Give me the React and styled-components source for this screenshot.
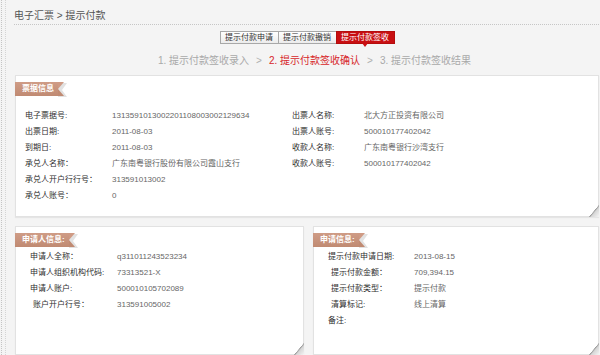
import React from "react";
import styled, { createGlobalStyle } from "styled-components";

const GlobalStyle = createGlobalStyle`
  html, body {
    margin: 0;
    padding: 0;
    background: #f4f4f4;
  }
  body {
    font-family: "Liberation Sans", "Noto Sans CJK SC", sans-serif;
  }
`;

const billLeft = [
  ["电子票据号:", "1313591013002201108003002129634"],
  ["出票日期:", "2011-08-03"],
  ["到期日:", "2011-08-03"],
  ["承兑人名称：", "广东南粤银行股份有限公司霞山支行"],
  ["承兑人开户行行号：", "313591013002"],
  ["承兑人账号：", "0"],
];

const billRight = [
  ["出票人名称:", "北大方正投资有限公司"],
  ["出票人账号:", "500010177402042"],
  ["收款人名称:", "广东南粤银行沙湾支行"],
  ["收款人账号:", "500010177402042"],
];

const applicant = [
  ["申请人全称：", "q311011243523234", 0],
  ["申请人组织机构代码:", "73313521-X", 0],
  ["申请人账户:", "500010105702089", 0],
  ["账户开户行号：", "313591005002", 3],
];

const request = [
  ["提示付款申请日期:", "2013-08-15", 0],
  ["提示付款金额：", "709,394.15", 3],
  ["提示付款类型：", "提示付款", 3],
  ["清算标记:", "线上清算", 3],
  ["备注:", "", 0],
];

function App() {
  return (
    <>
      <GlobalStyle />
      <Page>
        <Rail />
        <Main>
          <Crumb>电子汇票 &gt; 提示付款</Crumb>
          <Tabs>
            <Tab>提示付款申请</Tab>
            <Tab>提示付款撤销</Tab>
            <Tab active>提示付款签收</Tab>
          </Tabs>
          <Steps>
            <Step>1. 提示付款签收录入</Step>
            <Arrow>&gt;</Arrow>
            <Step current>2. 提示付款签收确认</Step>
            <Arrow>&gt;</Arrow>
            <Step>3. 提示付款签收结果</Step>
          </Steps>

          <Panel height={142}>
            <Ribbon>票据信息</Ribbon>
            <BillGrid>
              <Column>
                {billLeft.map(([k, v]) => (
                  <Row key={k}>
                    <Label width={87}>{k}</Label>
                    <Value>{v}</Value>
                  </Row>
                ))}
              </Column>
              <Column>
                {billRight.map(([k, v]) => (
                  <Row key={k}>
                    <Label width={72}>{k}</Label>
                    <Value>{v}</Value>
                  </Row>
                ))}
              </Column>
            </BillGrid>
          </Panel>

          <BottomRow>
            <Panel width={289} height={129}>
              <Ribbon>申请人信息:</Ribbon>
              <List>
                {applicant.map(([k, v, indent]) => (
                  <Row key={k} indent={indent}>
                    <Label width={87 - indent}>{k}</Label>
                    <Value>{v}</Value>
                  </Row>
                ))}
              </List>
            </Panel>
            <Panel grow height={129}>
              <Ribbon>申请信息:</Ribbon>
              <List>
                {request.map(([k, v, indent]) => (
                  <Row key={k} indent={indent}>
                    <Label width={86 - indent}>{k}</Label>
                    <Value>{v}</Value>
                  </Row>
                ))}
              </List>
            </Panel>
          </BottomRow>
        </Main>
      </Page>
    </>
  );
}

export default App;

const Page = styled.div`
  display: flex;
  width: 600px;
  height: 355px;
  overflow: hidden;
  background: #f4f4f4;
`;

const Rail = styled.div`
  flex: none;
  width: 3px;
  margin-left: 1px;
  border-left: 1px dotted #c4c4c4;
  border-right: 1px dotted #d4d4d4;
`;

const Main = styled.div`
  flex: 1;
  display: flex;
  flex-direction: column;
  margin-left: 8px;
  margin-right: 1px;
`;

const Crumb = styled.div`
  height: 25px;
  box-sizing: border-box;
  padding-top: 10px;
  font-size: 10px;
  line-height: 12px;
  color: #555;
  border-bottom: 1px dotted #c6c6c6;
`;

const Tabs = styled.div`
  display: flex;
  justify-content: center;
  margin-top: 6px;
  padding-left: 1px;
`;

const Tab = styled.div`
  position: relative;
  width: 59px;
  height: 13px;
  box-sizing: border-box;
  text-align: center;
  font-size: 8px;
  line-height: 11px;
  color: ${(p) => (p.active ? "#fff" : "#333")};
  border: 1px solid ${(p) => (p.active ? "#b40d0d" : "#a8a8a8")};
  background: ${(p) =>
    p.active ? "#c80f12" : "linear-gradient(#ffffff, #ececec)"};
  & + & {
    margin-left: -1px;
  }
  &::after {
    content: "";
    display: ${(p) => (p.active ? "block" : "none")};
    position: absolute;
    left: 50%;
    top: 100%;
    margin-left: -3px;
    border-left: 3px solid transparent;
    border-right: 3px solid transparent;
    border-top: 4px solid #c80f12;
  }
`;

const Steps = styled.div`
  display: flex;
  justify-content: center;
  align-items: center;
  margin-top: 10px;
  padding-left: 16px;
  height: 14px;
  font-size: 10px;
  line-height: 14px;
  white-space: nowrap;
`;

const Step = styled.span`
  color: ${(p) => (p.current ? "#d7262a" : "#a9a9a9")};
`;

const Arrow = styled.span`
  color: #b0b0b0;
  margin: 0 7px;
`;

const Panel = styled.div`
  position: relative;
  box-sizing: border-box;
  height: ${(p) => p.height}px;
  width: ${(p) => (p.width ? `${p.width}px` : "auto")};
  flex: ${(p) => (p.grow ? 1 : "none")};
  margin-top: 7px;
  margin-left: 1px;
  background: #fff;
  border: 1px solid #e2e2e2;
  box-shadow: 0 1px 1px rgba(0, 0, 0, 0.06);

  &::after {
    content: "";
    position: absolute;
    right: -1px;
    bottom: -1px;
    width: 10px;
    height: 12px;
    background: linear-gradient(
      to bottom right,
      transparent 0 48%,
      #9c9c9c 51%,
      #d6d6d6 60%,
      #f4f4f4 100%
    );
  }
`;

const Ribbon = styled.div`
  position: relative;
  display: inline-block;
  margin-top: 6px;
  margin-left: -1px;
  height: 14px;
  padding: 0 4px 0 7px;
  font-size: 8px;
  font-weight: bold;
  line-height: 14px;
  color: #fff;
  background: linear-gradient(#cf9c86, #c08a72);

  &::before {
    content: "";
    position: absolute;
    top: 1px;
    right: -9px;
    width: 0;
    height: 0;
    border-top: 7px solid #e2e2e2;
    border-bottom: 7px solid #e2e2e2;
    border-right: 5px solid transparent;
    border-left: 4px solid #e2e2e2;
  }
  &::after {
    content: "";
    position: absolute;
    top: 0;
    right: -6px;
    width: 0;
    height: 0;
    border-top: 7px solid #cf9a84;
    border-bottom: 7px solid #c08a72;
    border-right: 6px solid transparent;
  }
`;

const BillGrid = styled.div`
  display: grid;
  grid-template-columns: 267px 1fr;
  margin-top: 12px;
  padding-left: 9px;
`;

const Column = styled.div`
  display: flex;
  flex-direction: column;
`;

const List = styled.div`
  display: flex;
  flex-direction: column;
  margin-top: 2px;
  padding-left: 14px;
`;

const Row = styled.div`
  display: flex;
  height: 16px;
  line-height: 16px;
  font-size: 8px;
  white-space: nowrap;
  padding-left: ${(p) => p.indent || 0}px;
`;

const Label = styled.span`
  flex: none;
  width: ${(p) => p.width}px;
  color: #2e2e2e;
`;

const Value = styled.span`
  color: #666;
`;

const BottomRow = styled.div`
  display: flex;
  gap: 8px;
  margin-top: 2px;
`;
